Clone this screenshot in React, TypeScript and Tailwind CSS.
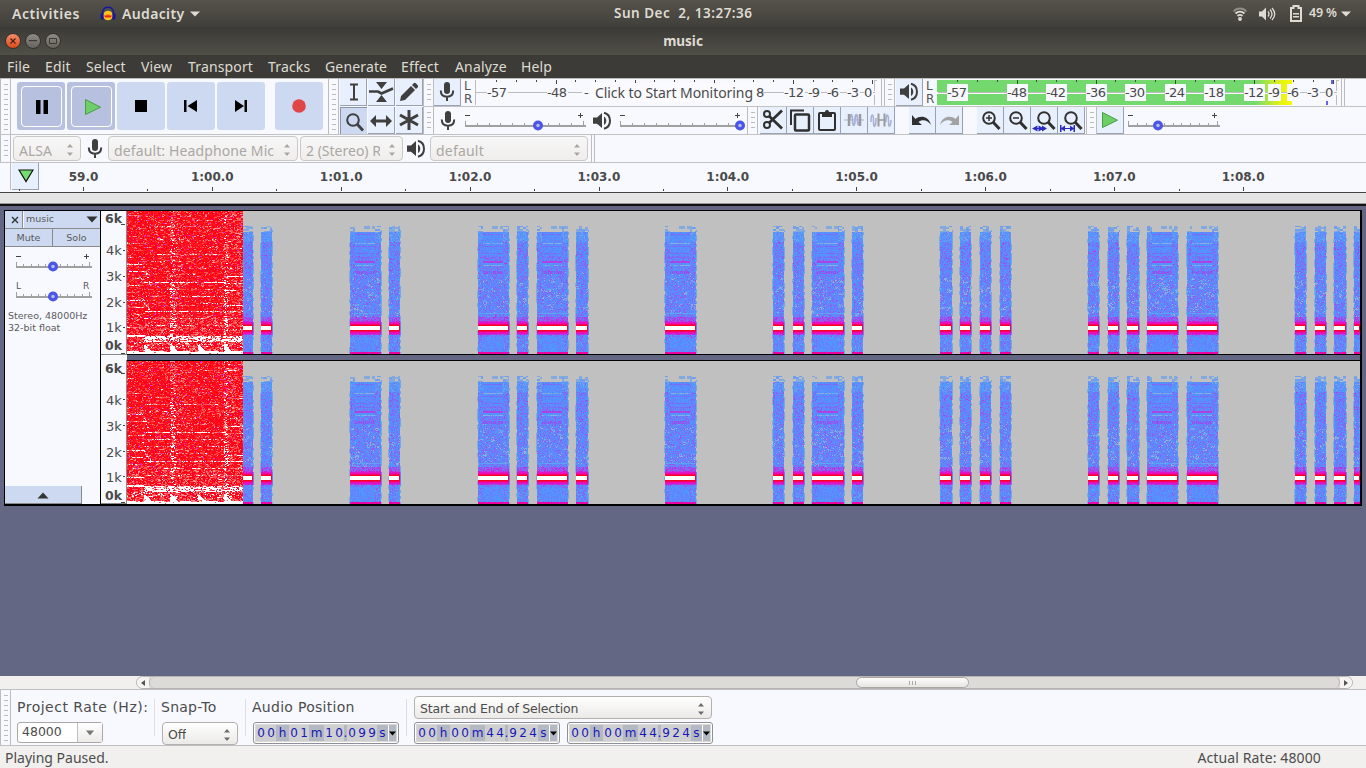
import type { ReactNode } from 'react';

const UI = '"Noto Sans", "Open Sans", sans-serif';
const DV = '"DejaVu Sans", sans-serif';

/* ---------- spectrogram ---------- */

const W = 1233;
const H = 143;
const MUSIC_END = 116;

const TONES: [number, number][] = [
  [116, 126], [134, 145], [223, 254], [262, 273], [351, 382], [390, 401], [410, 441],
  [449, 461], [538, 569], [646, 657], [666, 677], [685, 717], [725, 736], [813, 825],
  [833, 844], [853, 864], [873, 884], [961, 972], [981, 992], [1000, 1012], [1020, 1051],
  [1060, 1091], [1168, 1179], [1188, 1199], [1207, 1219], [1227, 1233],
];

function makeRandom(seed: number) {
  let s = seed;
  return () => {
    s = (s * 1664525 + 1013904223) >>> 0;
    return s / 4294967296;
  };
}

function hash(a: number, b: number, c: number) {
  const v = Math.sin(a * 12.9898 + b * 78.233 + c * 37.719) * 43758.5453;
  return v - Math.floor(v);
}

type Layers = Record<string, string[]>;

function put(layers: Layers, color: string, x: number, y: number, n: number) {
  (layers[color] ??= []).push(`M${x} ${y}h${n}v1h-${n}z`);
}

function toneColor(y: number, dx: number, w: number, r: number, start: number): string | null {
  const long = w > 20;
  const edge = dx === 0 || dx === w - 1;
  if (y < 15) return null;
  if (y < 21) {
    if (long && dx > 4 && dx < w - 6) {
      const flag = y > 14 && y < 18 && ((dx > 13 && dx < 20) || (dx > 21 && dx < 26));
      return flag ? '#84a9dc' : null;
    }
    const block = hash(Math.floor(dx / 3), Math.floor(y / 2), start);
    return block < 0.62 ? (block < 0.25 ? '#6f9fef' : '#84a9dc') : null;
  }
  if (y >= 141) return r < 0.8 ? '#ee0099' : '#d414c8';
  if (y >= 115 && y <= 118) return dx === w - 1 ? '#ff0033' : '#ffffff';
  if (y === 114 || y === 119) return edge ? '#ff0050' : '#ff0018';
  const d = y < 114 ? 114 - y : y - 119;
  if (d === 1) return '#f6006c';
  if (d === 2) return '#ea0cb0';
  if (d === 3) return r < 0.75 ? '#e212c4' : '#cc20d4';
  if (d === 4) return r < 0.5 ? '#d01cd0' : '#a848e8';
  if (d <= 8 && y < 114) return r < 0.55 - d * 0.03 ? '#b434e0' : '#8664f4';
  if (y > 66 && y < 110) {
    const patch = hash(Math.floor((start + dx) / 4), Math.floor(y / 3), 5);
    if (patch > 0.86 && r < 0.55) return r < 0.2 ? '#8fb3d4' : '#6ca4ec';
  }
  if (edge && r < 0.62) return '#4b9cff';
  if (long && dx > 4 && dx < w - 6) {
    if (y === 50 || y === 51) return r < 0.85 ? '#b040e2' : '#8d55f0';
    if (y >= 60 && y <= 62) return (dx % 2 ? r < 0.8 : r < 0.3) ? '#9a4eea' : '#6877fc';
    if (y === 32 || y === 54) return r < 0.75 ? '#86b0e2' : '#5a98fa';
    if (y === 25 || y === 28 || y === 52 || y === 53) return r < 0.8 ? '#5096ff' : '#6d7afc';
    if (y === 23 || y === 35 || y === 42 || y === 46) return r < 0.6 ? '#7f66f4' : '#6d7afc';
    if (y < 45 || y > 125) return (dx + y) % 2 ? '#5a8cfc' : r < 0.5 ? '#6a7cfa' : '#4b9cff';
  }
  if (long && (y === 102 || y === 107) && dx > 1) return r < 0.8 ? '#62a4f0' : '#4b9cff';
  if (y < 31) return r < 0.55 ? '#5298fc' : r < 0.75 ? '#6a8cf8' : r < 0.9 ? '#76a6e8' : '#7c6cf6';
  if (y > 60 && y < 103 && r > 0.97) return '#8fb4dc';
  if (y > 126 && r > 0.93) return '#6aa6ea';
  if (r < 0.4) return '#5593fc';
  if (r < 0.68) return '#6880fa';
  if (r < 0.87) return '#7a70f6';
  return r < 0.975 ? '#8e5af0' : '#a644e2';
}

const BRIGHT = [71, 100, 127];
const MEDIUM = [43, 78, 85, 107, 114];
const FAINT = [9, 15, 28, 36, 50, 57, 63, 92, 118];

function musicColor(x: number, y: number, r: number, seed: number): string {
  const seg = x < 17 ? 0 : x < 43 ? 1 : x < 98 ? 2 : 3;
  const dash = hash(Math.floor(x / 5), y, seed);
  const row = hash(1, y, seed);
  const n = seg === 0 ? y + 11 : seg === 3 && y < 98 ? y + 6 : y;
  let white = 0;
  let pink = 0.12 + 0.12 * row;
  if (BRIGHT.includes(n)) {
    white = dash > 0.2 ? 0.7 : 0.2;
    pink = 0.9;
  } else if (MEDIUM.includes(n)) {
    white = dash > 0.45 ? 0.36 : 0.03;
    pink = dash > 0.3 ? 0.85 : 0.4;
  } else if (FAINT.includes(n)) {
    white = dash > 0.6 ? 0.12 : 0;
    pink = dash > 0.4 ? 0.6 : 0.25;
  }
  if (seg === 0 && (y === 53 || y === 89)) {
    white = 0.6;
    pink = 0.95;
  }
  if (x > 15 && x < 24 && (Math.abs(y - (53 + (x - 16) * 3)) < 2 || Math.abs(y - (89 + (x - 16) * 1.5)) < 2)) {
    white = 0.4;
    pink = 0.8;
  }
  if ((x >= 43 && x <= 47) || (x >= 97 && x <= 100)) {
    white = Math.max(white, 0.04 + y / 480);
    pink = Math.max(pink, 0.55);
  } else if (x > 47 && x < 56) {
    pink = Math.max(pink, 0.32);
  } else if (seg === 3) {
    pink = Math.max(pink, 0.32);
  }
  if (y > 104) pink = Math.max(pink, 0.3 + (y - 104) / 140);
  if (x >= 17 && y >= 125 && y <= 130) {
    white = dash > 0.35 ? 0.8 : 0.35;
    pink = 0.85;
  }
  if (x < 17 && (y === 124 || y === 125)) {
    white = 0.9;
    pink = 1;
  }
  if (y >= 131 && y < 138) white = Math.max(white, 0.1);
  const since = x - (x < 17 ? -8 : x < 43 ? 17 : x < 71 ? 43 : x < 97 ? 71 : 97);
  if (y > 142 - Math.max(3 - since * 0.05, 9 - since * 0.9)) {
    white = 0.96;
    pink = 1;
  }
  if (r < white) return '#ffffff';
  if (r < white + (pink - white) * 0.3) return '#ff9090';
  if (r < pink) return '#ff5050';
  if (r > 0.985) return y < 112 ? '#dc28dc' : '#ff0040';
  if (r > 0.92) return '#f4004c';
  return r > 0.5 ? '#ff0016' : '#ff1a1c';
}

function buildSpectrum(seed: number): [string, string][] {
  const layers: Layers = {};
  const rand = makeRandom(seed);
  for (let y = 0; y < H; y++) {
    let x = 0;
    while (x < MUSIC_END) {
      const n = Math.min(rand() < 0.3 ? 2 : 1, MUSIC_END - x);
      put(layers, musicColor(x, y, rand(), seed % 17), x, y, n);
      x += n;
    }
    for (const [a, b] of TONES) {
      const w = b - a;
      let run = 0;
      let last: string | null = null;
      for (let dx = 0; dx <= w; dx++) {
        const c = dx < w ? toneColor(y, dx, w, rand(), a) : null;
        if (dx < w && c === last) {
          run++;
          continue;
        }
        if (last) put(layers, last, a + dx - run, y, run);
        last = c;
        run = 1;
      }
      const near = Math.abs(y - 117) < 7;
      if (y > 18 && b < W && (near || hash(b, Math.floor(y / 3), 2) < 0.6)) {
        put(layers, near ? '#5b86f0' : '#7ba7e0', b, y, 1);
      }
      if (y > 24 && a > MUSIC_END && hash(a, Math.floor(y / 4), 8) < 0.5) {
        put(layers, '#86aadb', a - 1, y, 1);
      }
    }
  }
  return Object.entries(layers).map(([c, d]) => [c, d.join('')]);
}

const CHANNELS = [buildSpectrum(4127), buildSpectrum(9341)];

function Spectrum({ channel }: { channel: number }) {
  return (
    <svg width={W} height={H} className="block bg-[#c0c0c0]" shapeRendering="crispEdges">
      {CHANNELS[channel].map(([color, d]) => (
        <path key={color} fill={color} d={d} />
      ))}
    </svg>
  );
}

/* ---------- small parts ---------- */

function Grip({ h, className = '' }: { h: number; className?: string }) {
  const marks = [];
  for (let y = 5; y < h - 3; y += 5) marks.push(y);
  return (
    <svg width="11" height={h} className={`block shrink-0 ${className}`} shapeRendering="crispEdges">
      <path d={`M0 0h1v${h}h-1zM10 0h1v${h}h-1z`} fill="#bdbdbd" />
      {marks.map((y) => (
        <rect key={y} x="4" y={y} width="4" height="1" fill="#bcbcbc" />
      ))}
    </svg>
  );
}

function Btn({ children, className = '', down = false }: { children: ReactNode; className?: string; down?: boolean }) {
  return (
    <button
      className={`flex h-[27px] w-[27px] shrink-0 items-center justify-center ${
        down
          ? 'border-l border-t border-[#8a94ad] bg-[#ccd9f0]'
          : 'border-b border-r border-[#9aa1b2] bg-[#e9f0fd]'
      } ${className}`}
    >
      {children}
    </button>
  );
}

function Mic({ className = '' }: { className?: string }) {
  return (
    <svg width="16" height="22" viewBox="0 0 16 22" className={`block shrink-0 ${className}`}>
      <rect x="5" y="1" width="6" height="12" rx="3" fill="#3f3f3f" />
      <path d="M1.8 9.5c0 4 2.4 6.2 6.2 6.2s6.2-2.2 6.2-6.2M8 15.5V20" fill="none" stroke="#3f3f3f" strokeWidth="2" />
    </svg>
  );
}

function Speaker({ className = '' }: { className?: string }) {
  return (
    <svg width="20" height="20" viewBox="0 0 20 20" className={`block shrink-0 ${className}`}>
      <path d="M1 6.5h4L10 2v15L5 12.8H1z" fill="#3f3f3f" />
      <path d="M12 5.5c3 1.6 3 6.800 0 8.400z" fill="#3f3f3f" />
      <path d="M12 1.800c8 2 8 14 0 16" fill="none" stroke="#3f3f3f" strokeWidth="2" />
    </svg>
  );
}

function Play() {
  return (
    <svg width="18" height="18" viewBox="0 0 18 18">
      <path d="M1.500 1.500L16.500 9.200 1.500 16.500z" fill="#6ecf68" stroke="#4a9c48" />
    </svg>
  );
}

function Slider({ w, thumb, steps = 10, labels = ['−', '+'], className = '' }: { w: number; thumb: number; steps?: number; labels?: string[]; className?: string }) {
  const ticks = Array.from({ length: steps + 1 }, (_, i) => Math.round((i * (w - 3)) / steps));
  return (
    <svg width={w} height="24" className={`block shrink-0 overflow-visible ${className}`}>
      <g shapeRendering="crispEdges" fill="#a0a0a0">
        <rect x="0" y="14" width={w} height="2" />
        {ticks.map((x, i) => (
          <rect key={x} x={x} y={i === 0 || i === steps ? 10 : 12} width="1" height="4" />
        ))}
      </g>
      {labels[0] === '−' ? (
        <path d={`M0 4h5v1H0zM${w - 8} 4h5v1h-5zM${w - 6} 2h1v5h-1z`} fill="#444" shapeRendering="crispEdges" />
      ) : (
        <g fill="#555" fontFamily={DV} fontSize="9">
          <text x="0" y="7">{labels[0]}</text>
          <text x={w - 9} y="7">{labels[1]}</text>
        </g>
      )}
      <circle cx={thumb} cy="14.500" r="3.400" fill="#b9bfe0" stroke="#4a55ea" strokeWidth="3.200" />
    </svg>
  );
}

function Magnifier({ children, x = 0 }: { children?: ReactNode; x?: number }) {
  return (
    <svg width="25" height="25" viewBox="0 0 25 25" className="shrink-0">
      <g fill="none" stroke="#303030" transform={`translate(${x + 0.5} 0.5)`}>
        <circle cx="10.500" cy="9.500" r="5.800" strokeWidth="2" />
        <path d="M14.500 13.500l6.500 7" strokeWidth="3" />
      </g>
      {children}
    </svg>
  );
}

function Spin({ dim = false }: { dim?: boolean }) {
  const c = dim ? '#aaa7a2' : '#6b6b6b';
  return (
    <svg width="8" height="14" viewBox="0 0 8 14" className="shrink-0">
      <path d="M1 4.500L4 1l3 3.500zM1 9.500L4 13l3-3.500z" fill={c} />
    </svg>
  );
}

function Combo({ text, className, dim = false }: { text: string; className: string; dim?: boolean }) {
  return (
    <div
      className={`flex shrink-0 items-center justify-between overflow-hidden rounded-[4px] border bg-gradient-to-b pl-[5px] pr-[6px] ${
        dim ? 'border-[#cbc8c5] from-[#f8f7f7] to-[#efeeed] pt-[3px] text-[#aba7a3]' : 'border-[#b4b1ad] from-[#ffffff] to-[#ebeae8] pt-[3px] text-[#4c4c4c]'
      } ${className}`}
    >
      <span className="overflow-hidden whitespace-nowrap">{text}</span>
      <Spin dim={dim} />
    </div>
  );
}

/* ---------- level meters ---------- */

function Meter({ active = false }: { active?: boolean }) {
  const zero = active ? 396 : 397;
  const ticks = Array.from({ length: 20 }, (_, i) => i);
  const shown = active ? [57, 48, 42, 36, 30, 24, 18, 12, 9, 6, 3, 0] : [57, 48, 12, 9, 6, 3, 0];
  const pos = (db: number) => Math.round(zero - (db / 3) * 19.78);
  return (
    <svg width="402" height="27" className="block shrink-0">
      <defs>
        <linearGradient id="level">
          <stop offset="0" stopColor="#73d96f" />
          <stop offset="0.894" stopColor="#73d96f" />
          <stop offset="0.97" stopColor="#e7f312" />
          <stop offset="1" stopColor="#f8fa05" />
        </linearGradient>
      </defs>
      <g shapeRendering="crispEdges">
        {active && <rect x="0" y="1" width="355" height="25" fill="url(#level)" />}
        {active && <rect x="0" y="13" width="355" height="2" fill="#f8f9ff" />}
        <rect x="1" y="13" width="399" height="1" fill="#bdbdbd" />
        {!active && <path d="M0 1h1v25h-1z" fill="#bdbdbd" />}
        <path d="M399 1h3v1h-2v10h-1zM399 16h1v10h-1z" fill="#bdbdbd" />
        {ticks.map((i) => (
          <rect key={i} x={pos(i * 3)} y="1" width="1" height={i % 4 === 0 ? 4 : 2} fill="#444" />
        ))}
        {active && <path d="M394 1h2v4h-2zM389 22h2v4h-2z" fill="#6464ee" />}
      </g>
      <g fontFamily={DV} fontSize="13" fill="#4a4a4a">
        {shown.map((db) => {
          const w = db === 0 ? 9 : db < 10 ? 13 : 21;
          const x = db === 0 ? pos(0) - 8 : pos(db) - Math.floor(w / 2) + (active ? 0 : 1);
          return (
            <g key={db}>
              <rect x={x} y="5" width={w} height="17" fill="#f8f9ff" />
              <text x={x} y="18" textLength={w - 1}>{db === 0 ? '0' : `-${db}`}</text>
            </g>
          );
        })}
        {!active && (
          <>
            <rect x="107" y="4" width="180" height="18" fill="#f8f9ff" />
            <text x="109" y="18">-</text>
            <rect x="115" y="4" width="167" height="19" fill="#fbfbff" />
            <text x="120" y="19" fontFamily={UI} fontSize="14" textLength="158">Click to Start Monitoring</text>
            <text x="281" y="18">8</text>
          </>
        )}
      </g>
    </svg>
  );
}

function LR() {
  return (
    <div className="flex h-[27px] w-[10px] shrink-0 flex-col justify-center text-[12px] leading-[13px] text-[#555]">
      <span>L</span>
      <span>R</span>
    </div>
  );
}

/* ---------- toolbars ---------- */

function BigBtn({ children, down = false, className = '' }: { children: ReactNode; down?: boolean; className?: string }) {
  return (
    <button className={`h-12 w-12 shrink-0 rounded-[3px] p-[3px] ${down ? 'bg-[#b8c0e0] pl-[4px] pt-[4px]' : 'bg-[#ccd9f0]'} ${className}`}>
      <span className={`flex h-full w-full items-center justify-center rounded-[4px] border ${down ? 'border-white' : 'border-transparent'}`}>
        {children}
      </span>
    </button>
  );
}

function Transport() {
  return (
    <div className="flex h-[55px] w-[329px] shrink-0 pt-[3px]">
      <Grip h={55} className="-mt-[3px] mr-[6px]" />
      <div className="flex gap-[2px]">
        <BigBtn down>
          <svg width="14" height="14"><path d="M1 0h4.500v14H1zM8.500 0H13v14H8.500z" /></svg>
        </BigBtn>
        <BigBtn down><span className="ml-[2px] mt-px"><Play /></span></BigBtn>
        <BigBtn><svg width="12" height="12"><path d="M0 0h12v12H0z" /></svg></BigBtn>
        <BigBtn><svg width="14" height="12" className="-ml-[2px]"><path d="M1 0h2.500v12H1zM14 0v12L4.500 6z" /></svg></BigBtn>
        <BigBtn><svg width="14" height="12"><path d="M1 0l9 6-9 6zM10.500 0H13v12h-2.500z" /></svg></BigBtn>
        <BigBtn className="ml-2"><svg width="14" height="14"><circle cx="7" cy="7" r="6.800" fill="#e04646" /></svg></BigBtn>
      </div>
    </div>
  );
}

function Tools() {
  return (
    <div className="grid grid-cols-[27px_27px_27px] gap-x-px gap-y-px">
      <Btn>
        <svg width="10" height="18" fill="none" stroke="#3f3f3f" strokeWidth="2" className="ml-[2px]"><path d="M1 1.500h8M5 2v14M1 16.500h8" /></svg>
      </Btn>
      <Btn>
        <svg width="25" height="22"><path d="M7 1h11l-5.500 7zM7 21h11l-5.500-7z" fill="#3f3f3f" /><path d="M0 10.500h9l3.500 2L24 7.500" fill="none" stroke="#3f3f3f" strokeWidth="2.600" /></svg>
      </Btn>
      <Btn>
        <svg width="20" height="20"><path d="M1 19l1-5L12 4l4 4L6 18zM13 3l2-2c1-1 5 3 4 4l-2 2z" fill="#3f3f3f" /></svg>
      </Btn>
      <Btn down>
        <svg width="20" height="20" fill="none" stroke="#3f3f3f" className="ml-px mt-px"><circle cx="8" cy="8" r="5.800" strokeWidth="2" /><path d="M12 12l6 6.500" strokeWidth="2.800" /></svg>
      </Btn>
      <Btn>
        <svg width="22" height="14" className="mt-px"><path d="M0 7l6-6v4.500h10V1l6 6-6 6V8.500H6V13z" fill="#3f3f3f" /></svg>
      </Btn>
      <Btn>
        <svg width="20" height="20" fill="none" stroke="#3f3f3f" strokeWidth="3"><path d="M10 0v20M1 5l18 10M1 15L19 5" /></svg>
      </Btn>
    </div>
  );
}

function ZoomArrow({ d }: { d: string }) {
  return <path d={d} fill="#2a2ac0" />;
}

function Toolbars() {
  return (
    <div className="flex flex-col border-t border-[#bdbdbd] bg-[#f8f9ff]">
      <div className="flex h-[56px] border-b border-[#c2c2c2]">
        <Transport />
        <Grip h={55} className="-ml-[1px]" />
        <div className="ml-px"><Tools /></div>
        <div className="flex flex-1 flex-col">
          <div className="flex h-[28px] border-b border-[#c2c2c2]">
            <Grip h={27} />
            <Btn><Mic /></Btn>
            <div className="ml-[3px] mr-px"><LR /></div>
            <Meter />
            <div className="ml-[4px] mr-[2px] w-px bg-[#bdbdbd]" />
            <Grip h={27} />
            <Btn className="ml-px"><Speaker /></Btn>
            <div className="ml-[3px] mr-px"><LR /></div>
            <Meter active />
            <div className="ml-[2px] w-[4px] border-x border-[#bdbdbd]" />
          </div>
          <div className="flex h-[27px] items-center">
            <Grip h={27} />
            <Mic className="ml-[6px] mr-[9px]" />
            <Slider w={121} thumb={73} className="mt-[4px]" />
            <Speaker className="ml-[6px] mr-[8px]" />
            <Slider w={123} thumb={120} className="mt-[4px]" />
            <Grip h={27} className="ml-[4px]" />
            <Btn className="ml-[2px]">
              <svg width="22" height="22" fill="none" stroke="#303030">
                <circle cx="5" cy="5" r="3" strokeWidth="2" /><circle cx="5" cy="16" r="3" strokeWidth="2" />
                <path d="M7 7l13 12.500M7 14L20 1.500" strokeWidth="2.800" />
              </svg>
            </Btn>
            <Btn>
              <svg width="22" height="23" fill="none" stroke="#303030" strokeWidth="2"><path d="M2 16V1.500h13" /><rect x="6" y="5.500" width="14" height="16" rx="1" strokeWidth="2.500" /></svg>
            </Btn>
            <Btn>
              <svg width="20" height="23"><rect x="2" y="4" width="16" height="17" rx="1" fill="none" stroke="#303030" strokeWidth="2" /><path d="M5 3h3a2 2 0 0 1 4 0h3v5H5z" fill="#303030" /></svg>
            </Btn>
            <Btn>
              <svg width="22" height="18" fill="none"><path d="M1 9h20" stroke="#aab0d0" /><path d="M7 9c0-7 2.500-7 2.500 0s2.500 7 2.500 0 2.500-7 2.500 0 1 5 2 2" stroke="#a8b0d8" strokeWidth="1.800" /><path d="M6 3v12M17 3v12" stroke="#9a9a9a" strokeWidth="2.500" /></svg>
            </Btn>
            <Btn>
              <svg width="22" height="18" fill="none"><path d="M1 11c0-9 2.500-9 2.500-1s2.500 7 2.500-3M16 11c0-9 2.500-9 2.500-1s2 6 2.500-1" stroke="#a8b0d8" strokeWidth="1.600" /><path d="M9 9h6" stroke="#9a9a9a" strokeWidth="1.500" /><path d="M8.500 2.500v13M14.500 2.500v13" stroke="#9a9a9a" strokeWidth="2" /></svg>
            </Btn>
            <Btn className="ml-[14px]">
              <svg width="22" height="14" className="mt-[2px]"><path d="M1 1v10h10L7.500 8C11 5 17 6 20 11 18 2 9 1 4.500 5z" fill="#303030" /></svg>
            </Btn>
            <Btn>
              <svg width="22" height="14" className="mt-[2px]"><path d="M21 1v10H11l3.500-3C11 5 5 6 2 11 4 2 13 1 17.500 5z" fill="#a2a2a2" /></svg>
            </Btn>
            <Btn className="ml-[14px]"><Magnifier><path d="M8 10h6M11 7v6" stroke="#303030" strokeWidth="1.500" /></Magnifier></Btn>
            <Btn><Magnifier><path d="M8 10h6" stroke="#303030" strokeWidth="1.500" /></Magnifier></Btn>
            <Btn><Magnifier x={1}><ZoomArrow d="M0 20.500l5.500-3v2.500h1v-2.500l5.500 3-5.500 3v-2.500h-1v2.500zM8 20h2v-2.500l5 3-5 3v-2.500H8z" /></Magnifier></Btn>
            <Btn><Magnifier x={1}><ZoomArrow d="M1 17h1.500v3L6 17.500V20h5v-2.500l3.500 2.500v-3H16v7h-1.500v-3L11 23.500V21H6v2.500L2.500 21v3H1z" /></Magnifier></Btn>
            <Grip h={27} className="ml-px" />
            <Btn><Play /></Btn>
            <Slider w={92} thumb={30} className="ml-[4px] mt-[4px]" />
          </div>
        </div>
      </div>
      <div className="flex h-[28px] items-center border-b border-[#c2c2c2] text-[14px]" style={{ fontFamily: UI }}>
        <Grip h={27} />
        <Combo dim text="ALSA" className="ml-[2px] h-[25px] w-[68px]" />
        <Mic className="ml-[6px]" />
        <Combo dim text="default: Headphone Mic" className="ml-[5px] h-[25px] w-[190px] tracking-[0.12px]" />
        <Combo dim text="2 (Stereo) R" className="ml-[2px] h-[25px] w-[103px] gap-[8px]" />
        <Speaker className="ml-[3px]" />
        <Combo dim text="default" className="ml-[4px] h-[25px] w-[158px] tracking-[0.2px]" />
        <div className="ml-[3px] h-[27px] w-[4px] border-x border-[#bdbdbd]" />
      </div>
    </div>
  );
}

/* ---------- timeline ---------- */

const TIMES = ['59.0', '1:00.0', '1:01.0', '1:02.0', '1:03.0', '1:04.0', '1:05.0', '1:06.0', '1:07.0', '1:08.0'];

function Timeline() {
  return (
    <div className="flex h-[30px] bg-[#f8f9ff]">
      <div className="h-[27px] w-[11px] border-r border-[#bdbdbd]" />
      <Btn className="ml-px">
        <svg width="16" height="14" className="ml-[2px]"><path d="M1 1h14L8 12.500z" fill="#74dc70" stroke="#111" strokeWidth="1.200" /></svg>
      </Btn>
      <svg width="1366" height="30" className="-ml-[39px] block shrink-0">
        <path d="M0 29h1366v1H0z" fill="#444" />
        <g fontFamily={DV} fontSize="12" fontWeight="bold" fill="#4a4a4a" textAnchor="middle">
          {TIMES.map((t, i) => (
            <text key={t} x={83.5 + i * 128.85} y="18">{t}</text>
          ))}
        </g>
        <g fill="#444" shapeRendering="crispEdges">
          {Array.from({ length: 20 }, (_, i) => (
            <rect key={i} x={Math.round(18.5 + i * 64.45)} y={i % 2 ? 24 : 26} width="1" height={i % 2 ? 4 : 2} />
          ))}
        </g>
      </svg>
    </div>
  );
}

/* ---------- track ---------- */

function FreqRuler({ shift = 0 }: { shift?: number }) {
  const rows: [string, number][] = [['4k', 45], ['3k', 71], ['2k', 97], ['1k', 122]];
  return (
    <svg width="26" height="144" className="block bg-[#f8f9ff]">
      <path d="M25 0h1v144h-1zM0 143h25v1H0z" fill="#8a8a8a" />
      <g fontFamily={DV} fontSize="13" fill="#4a4a4a">
        <text x="4" y={12 + shift} fontWeight="bold" fontSize="12.500">6k</text>
        {rows.map(([t, y]) => (
          <text key={t} x="5" y={y - 1 + shift}>{t}</text>
        ))}
        <text x="4" y={139 + shift} fontWeight="bold" fontSize="12.500">0k</text>
      </g>
      <path d="M20 13h4v1h-4zM22 39h2v1h-2zM22 65h2v1h-2zM22 91h2v1h-2zM22 116h2v1h-2zM20 142h4v1h-4z" fill="#444" shapeRendering="crispEdges" />
    </svg>
  );
}

function Track() {
  return (
    <div className="ml-[4px] mt-[4px] flex h-[296px] w-[1358px] border-b-2 border-l border-r-2 border-t border-black bg-[#636784]">
      <div className="flex h-full w-[95px] shrink-0 flex-col bg-[#f8f9ff] text-[9.500px] text-[#5a5a5a]">
        <div className="flex h-[18px] gap-px border-b border-[#8a8a8a]">
          <div className="flex w-[18px] items-center justify-center border-r border-[#8a8a8a] bg-[#ccd9f0]">
            <svg width="8" height="8" stroke="#333" strokeWidth="1.400" className="ml-[2px]"><path d="M1 1l6 6M7 1L1 7" /></svg>
          </div>
          <div className="flex flex-1 items-center justify-between bg-[#ccd9f0] pl-[2px] pr-[2px]">
            <span>music</span>
            <svg width="12" height="7"><path d="M0.500 0.500h11L6 6.500z" fill="#333" /></svg>
          </div>
        </div>
        <div className="flex h-[18px] border-b border-[#8a8a8a] bg-[#ccd9f0] text-center leading-[17px]">
          <span className="w-[48px] border-r border-[#8a8a8a]">Mute</span>
          <span className="flex-1">Solo</span>
        </div>
        <Slider w={76} thumb={37} className="ml-[11px] mt-[5px]" />
        <Slider w={76} thumb={37} labels={['L', 'R']} className="ml-[11px] mt-[6px]" />
        <div className="ml-[3px] mt-[4px] whitespace-nowrap leading-[12px]">
          Stereo, 48000Hz
          <br />
          32-bit float
        </div>
        <div className="mt-auto flex h-[18px] w-[77px] items-center justify-center border-b border-r border-[#8a8a8a] bg-[#ccd9f0] pt-[2px]">
          <svg width="12" height="7"><path d="M0.500 6.500h11L6 0.500z" fill="#333" /></svg>
        </div>
      </div>
      <div className="w-px shrink-0 bg-black" />
      <div className="flex w-[26px] shrink-0 flex-col justify-between bg-[#f8f9ff]">
        <FreqRuler />
        <FreqRuler shift={1} />
      </div>
      <div className="flex flex-1 flex-col justify-between">
        <div className="border-b border-black"><Spectrum channel={0} /></div>
        <div className="border-t border-black"><Spectrum channel={1} /></div>
      </div>
    </div>
  );
}

/* ---------- bottom ---------- */

function TimeBox({ value }: { value: string }) {
  const widths: Record<string, string> = { h: 'w-[13px]', m: 'w-[15px]', s: 'w-[11px]', '.': 'w-[3px]' };
  return (
    <div className="flex h-[22px] w-[146px] shrink-0 rounded-[3px] border border-[#8f8f95] bg-white p-px text-[12px] text-[#1717b8]">
      <div className="flex flex-1 border border-[#d9d9d9]">
        {value.split('').map((c, i) => (
          <span
            key={i}
            className={`flex items-center justify-center ${widths[c] ?? 'w-[10px]'} ${widths[c] ? 'bg-[#b3b8c3]' : 'bg-[#cfcfcf]'}`}
          >
            {c}
          </span>
        ))}
        <span className="flex flex-1 items-center border-l border-white bg-[#b3b8c3]">
          <svg width="7" height="5"><path d="M0 0.500h7L3.500 4.500z" /></svg>
        </span>
      </div>
    </div>
  );
}

function SelectionBar() {
  return (
    <div className="flex h-[57px] border-y border-[#c0bfc6] bg-[#f8f9ff] text-[14px] text-[#4c4c4c]">
      <Grip h={55} />
      <div className="ml-[6px] flex w-[137px] flex-col">
        <span className="flex h-[32px] items-center whitespace-nowrap pt-[2px] tracking-[0.500px]">Project Rate (Hz):</span>
        <div className="flex h-[21px] w-[86px] rounded-[3px] border border-[#aaa7a4] bg-white text-[12.500px]">
          <span className="flex w-[60px] items-center border-r border-[#c4c2c0] pl-[4px]">48000</span>
          <span className="flex flex-1 items-center justify-center bg-gradient-to-b from-white to-[#ecebea]">
            <svg width="8" height="6"><path d="M0 0.500h8L4 5.500z" fill="#777" /></svg>
          </span>
        </div>
      </div>
      <div className="my-[9px] w-px bg-[#dedee2]" />
      <div className="ml-[6px] flex w-[84px] flex-col">
        <span className="flex h-[32px] items-center pt-[2px] tracking-[0.250px]">Snap-To</span>
        <Combo text="Off" className="ml-px h-[23px] w-[76px] text-[12.500px]" />
      </div>
      <div className="my-[9px] w-px bg-[#dedee2]" />
      <div className="ml-[6px] flex w-[154px] flex-col">
        <span className="flex h-[32px] items-center whitespace-nowrap pt-[2px] tracking-[0.280px]">Audio Position</span>
        <div className="ml-px"><TimeBox value="00h01m10.099s" /></div>
      </div>
      <div className="my-[9px] w-px bg-[#dedee2]" />
      <div className="ml-[7px] flex flex-col">
        <Combo text="Start and End of Selection" className="mb-[3px] mt-[6px] h-[23px] w-[298px] text-[12.500px] tracking-[-0.200px]" />
        <div className="flex gap-[7px]">
          <TimeBox value="00h00m44.924s" />
          <TimeBox value="00h00m44.924s" />
        </div>
      </div>
    </div>
  );
}

function HScroll() {
  return (
    <div className="flex h-[13px] bg-[#f1f0ee] pl-[136px] pr-[13px]">
      <div className="flex flex-1 rounded-full border border-[#b7b4b0] bg-[#dddbd8]">
        <span className="flex w-[12px] items-center justify-center rounded-l-full bg-[#f5f4f3]">
          <svg width="4" height="6"><path d="M4 0v6L0 3z" fill="#555" /></svg>
        </span>
        <span className="w-[707px] rounded-l-full border-l border-[#b7b4b0]" />
        <span className="flex w-[113px] items-center justify-center gap-[2px] rounded-full border border-[#aaa7a3] bg-gradient-to-b from-[#fbfbfa] to-[#e8e6e3]">
          <i className="h-[4px] w-px bg-[#aaa]" /><i className="h-[4px] w-px bg-[#aaa]" /><i className="h-[4px] w-px bg-[#aaa]" />
        </span>
        <span className="flex-1 rounded-r-full border-r border-[#b7b4b0]" />
        <span className="flex w-[12px] items-center justify-center rounded-r-full bg-[#f5f4f3]">
          <svg width="4" height="6"><path d="M0 0v6l4-3z" fill="#555" /></svg>
        </span>
      </div>
    </div>
  );
}

/* ---------- desktop chrome ---------- */

function Caret() {
  return <svg width="10" height="6"><path d="M0 0.500h10L5 5.500z" fill="#dfdbd2" /></svg>;
}

function TopBar() {
  return (
    <div className="flex h-[27px] items-center bg-gradient-to-b from-[#57534c] to-[#403f3a] text-[14px] font-semibold text-[#dfdbd2]">
      <span className="w-[89px] pl-[12px] tracking-[0.55px]">Activities</span>
      <svg width="16" height="16" viewBox="0 0 16 16" className="ml-[11px]">
        <circle cx="8" cy="9.500" r="4.800" fill="#f7c51c" />
        <path d="M2.500 9V6.500c0-7 11-7 11 0V9" fill="none" stroke="#1515a8" strokeWidth="1.500" />
        <path d="M0.500 7.500h3v6.500c-2 0-3-1-3-3.500zM15.500 7.500h-3v6.500c2 0 3-1 3-3.500z" fill="#1515a8" />
        <path d="M4 10l1-1 1 1 1-2 1 2 1-2 1 2 1-1 1 1-1 1-1 1-1-1-1 1-1-1-1 1z" fill="#ee2a12" />
      </svg>
      <span className="ml-[6px] w-[68px] tracking-[0.35px]">Audacity</span>
      <Caret />
      <span className="ml-[414px] w-[140px] whitespace-pre text-[13.500px] tracking-[0.5px]">Sun Dec  2, 13:27:36</span>
      <span className="flex-1" />
      <svg width="16" height="14" viewBox="0 0 16 14" fill="none" stroke="#dfdbd2" strokeWidth="1.800">
        <path d="M1.500 4.500c3.500-4 9.500-4 13 0" opacity="0.45" />
        <path d="M3.500 6.500c2.500-2.500 6.500-2.500 9 0M5.500 9c1.500-1.300 3.500-1.300 5 0" />
        <circle cx="8" cy="12" r="1" fill="#dfdbd2" />
      </svg>
      <svg width="17" height="14" viewBox="0 0 17 14" className="ml-[11px]">
        <path d="M0 4.500h3l4-4v13l-4-4H0z" fill="#dfdbd2" />
        <path d="M9 4.500q2 2.500 0 5M11 2.500q4 4.500 0 9M13 1q5.500 6 0 12" fill="none" stroke="#dfdbd2" strokeWidth="1.300" />
      </svg>
      <svg width="12" height="17" viewBox="0 0 12 17" className="ml-[14px]">
        <path d="M3.500 3V1h5v2H11v13H1V3z" fill="none" stroke="#dfdbd2" strokeWidth="2" />
        <path d="M3 8h6v1.500H3zM3 11h6v1.500H3z" fill="#dfdbd2" />
      </svg>
      <span className="ml-[7px] w-[32px] whitespace-nowrap text-[12.500px] tracking-[-0.2px]">49 %</span>
      <svg width="10" height="6" className="mr-[15px]"><path d="M0 0.500h10L5 5.500z" fill="#dfdbd2" /></svg>
    </div>
  );
}

function WinButton({ close = false, children }: { close?: boolean; children: ReactNode }) {
  return (
    <span className={`flex h-4 w-4 items-center justify-center rounded-full border border-[#33322e] ${close ? 'bg-gradient-to-b from-[#f58a66] to-[#dc4815]' : 'bg-gradient-to-b from-[#8e8b83] to-[#65635c]'}`}>
      {children}
    </span>
  );
}

function TitleBar() {
  return (
    <div className="grid h-[28px] grid-cols-3 items-center bg-gradient-to-b from-[#3b3a36] to-[#504f48]">
      <div className="flex gap-1 pl-[5px]">
        <WinButton close><svg width="6" height="6" stroke="#4a2010" strokeWidth="1.200"><path d="M0.500 0.500l5 5M5.500 0.500l-5 5" /></svg></WinButton>
        <WinButton><svg width="8" height="2"><path d="M0 0h8v1.200H0z" fill="#3b3a36" /></svg></WinButton>
        <WinButton><svg width="8" height="6"><path d="M0.500 0.500h7v5h-7z" fill="none" stroke="#3b3a36" /></svg></WinButton>
      </div>
      <span className="text-center text-[13.500px] font-bold text-[#dfdbd2]">music</span>
    </div>
  );
}

function MenuBar() {
  return (
    <div className="flex h-[23px] items-center bg-[#3c3b37] pl-[7px] text-[14px] tracking-[0.15px] text-[#dfdbd2]">
      <span className="w-[38px]">File</span>
      <span className="w-[41px]">Edit</span>
      <span className="w-[55px]">Select</span>
      <span className="w-[47px]">View</span>
      <span className="w-[80px]">Transport</span>
      <span className="w-[57px]">Tracks</span>
      <span className="w-[76px]">Generate</span>
      <span className="w-[54px]">Effect</span>
      <span className="w-[66px]">Analyze</span>
      <span>Help</span>
    </div>
  );
}

export default function App() {
  return (
    <div className="flex h-[768px] w-[1366px] flex-col overflow-hidden bg-[#636784]" style={{ fontFamily: DV }}>
      <div style={{ fontFamily: UI }}>
        <TopBar />
        <TitleBar />
        <MenuBar />
      </div>
      <Toolbars />
      <Timeline />
      <div className="h-[13px] border-b-2 border-[#111] bg-[#e4e4e4]">
        <div className="mt-[10px] h-px bg-[#999]" />
      </div>
      <div className="flex-1">
        <Track />
      </div>
      <HScroll />
      <SelectionBar />
      <div className="flex h-[22px] items-center justify-between bg-[#f1f0ee] pl-[5px] pr-[45px] text-[14px] text-[#4c4c4c]" style={{ fontFamily: UI }}>
        <span>Playing Paused.</span>
        <span className="tracking-[0.12px]">Actual Rate: 48000</span>
      </div>
    </div>
  );
}
